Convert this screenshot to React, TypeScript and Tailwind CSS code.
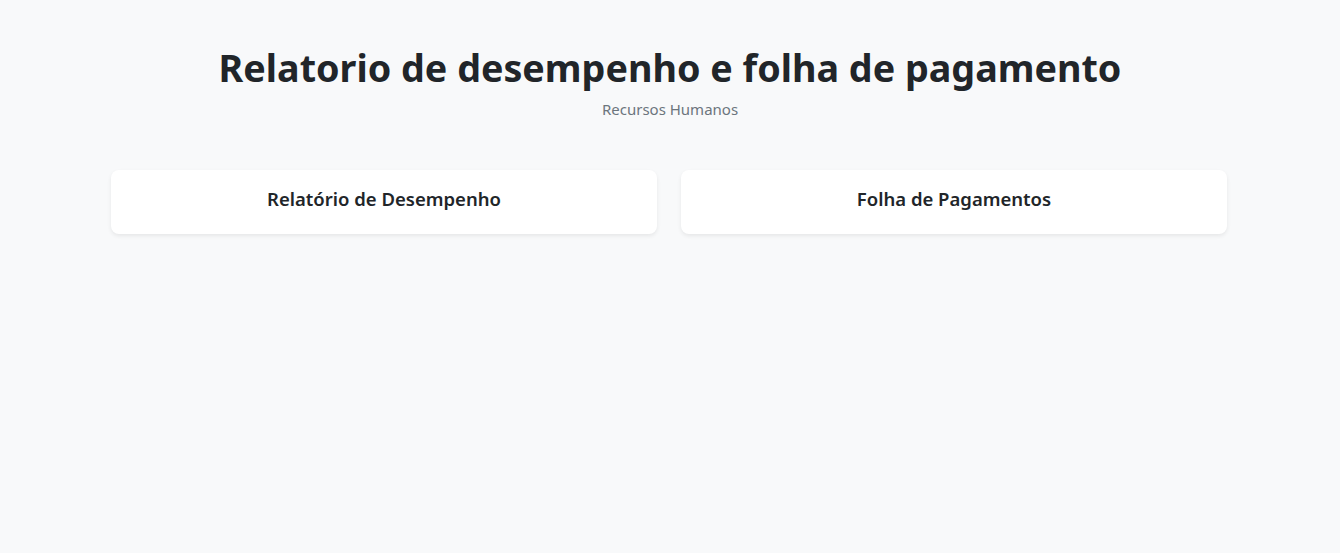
import React from "react";

const cards = ["Relatório de Desempenho", "Folha de Pagamentos"];

const App = () => {
  return (
    <div className="min-h-screen bg-[#f8f9fa] text-[#212529] font-['Noto_Sans',sans-serif]">
      {/* Header */}
      <div className="pt-[41px] text-center">
        <h1 className="text-[37.7px] font-bold leading-[54px]">
          Relatorio de desempenho e folha de pagamento
        </h1>
        <p className="mt-[3px] text-[15px] leading-[22px] text-[#6c757d]">Recursos Humanos</p>
      </div>

      {/* Cards */}
      <div className="mx-auto mt-[50px] grid w-[1116px] -translate-x-px grid-cols-2 gap-6">
        {cards.map((title) => (
          <div
            key={title}
            className="flex h-[64px] items-center justify-center rounded-lg bg-white pb-[7px] shadow-[0_2px_4px_rgba(0,0,0,0.075)]"
          >
            <h5 className="text-[18.5px] font-semibold">{title}</h5>
          </div>
        ))}
      </div>
    </div>
  );
};

export default App;
